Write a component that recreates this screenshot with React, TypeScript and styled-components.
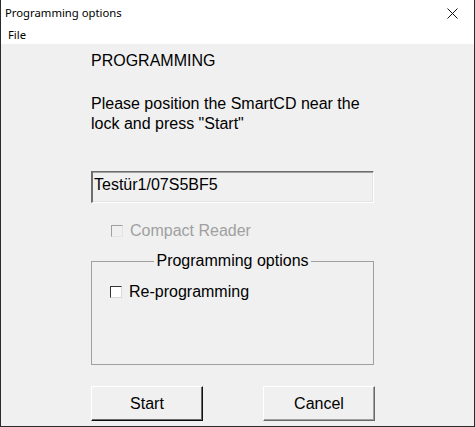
import React from "react";
import styled, { createGlobalStyle } from "styled-components";

const GlobalStyle = createGlobalStyle`
  html, body {
    margin: 0;
    padding: 0;
    background: #f0f0f0;
  }
  * {
    box-sizing: border-box;
  }
`;

export default function App() {
  return (
    <>
      <GlobalStyle />
      <Window>
        <TitleBar>
          <Title>Programming options</Title>
          <CloseButton aria-label="Close">
            <svg width="11" height="11" viewBox="0 0 11 11">
              <path d="M0.5 0.5 L10.5 10.5 M10.5 0.5 L0.5 10.5" stroke="#111" strokeWidth="1" />
            </svg>
          </CloseButton>
        </TitleBar>
        <MenuBar>
          <MenuItem>File</MenuItem>
        </MenuBar>

        <Body>
          <Heading>PROGRAMMING</Heading>
          <Message>
            Please position the SmartCD near the
            <br />
            lock and press "Start"
          </Message>

          <TextBox>Testür1/07S5BF5</TextBox>

          <CheckRow $indent={20} $top={19} $disabled>
            <CheckBox $disabled />
            <span>Compact Reader</span>
          </CheckRow>

          <GroupBox>
            <Legend>Programming options</Legend>
            <CheckRow $indent={18} $top={13}>
              <CheckBox />
              <span>Re-programming</span>
            </CheckRow>
          </GroupBox>

          <ButtonRow>
            <Button $default>Start</Button>
            <Button>Cancel</Button>
          </ButtonRow>
        </Body>
      </Window>
    </>
  );
}

const Window = styled.div`
  width: 475px;
  height: 427px;
  display: flex;
  flex-direction: column;
  border: 1px solid #2b2b2b;
  border-top: none;
  background: #f0f0f0;
  font-family: "Liberation Sans", Arial, sans-serif;
  color: #000;
`;

const TitleBar = styled.div`
  height: 26px;
  display: flex;
  align-items: center;
  justify-content: space-between;
  background: #fff;
  padding-left: 4px;
  font-family: "Noto Sans", "Open Sans", sans-serif;
  font-size: 11.3px;
`;

const Title = styled.span`
  margin-top: -1px;
`;

const CloseButton = styled.div`
  width: 46px;
  height: 26px;
  display: flex;
  align-items: center;
  justify-content: center;
  margin-right: -1px;
`;

const MenuBar = styled.div`
  height: 18px;
  display: flex;
  align-items: center;
  background: #fff;
  padding-left: 7px;
  font-family: "Noto Sans", "Open Sans", sans-serif;
  font-size: 11.3px;
`;

const MenuItem = styled.span`
  margin-top: -1px;
`;

const Body = styled.div`
  flex: 1;
  display: flex;
  flex-direction: column;
  padding: 8px 0 0 90px;
  font-size: 16px;
  line-height: 18px;
`;

const Heading = styled.div``;

const Message = styled.div`
  margin-top: 24px;
  line-height: 20px;
`;

const TextBox = styled.div`
  margin-top: 37px;
  height: 32px;
  width: 283px;
  padding: 4px 0 0 1px;
  background: #f0f0f0;
  border-style: solid;
  border-width: 1px 1px 1px 2px;
  border-color: #6e6e6e #fff #fff #6e6e6e;
  box-shadow: inset 0 1px 0 #a0a0a0, inset -1px -1px 0 #e3e3e3;
`;

const CheckRow = styled.div<{ $indent: number; $top: number; $disabled?: boolean }>`
  display: flex;
  align-items: center;
  gap: 7px;
  margin-top: ${(p) => p.$top}px;
  padding-left: ${(p) => p.$indent}px;
  height: 18px;
  color: ${(p) => (p.$disabled ? "#a0a0a0" : "#000")};
`;

const CheckBox = styled.span<{ $disabled?: boolean }>`
  width: 12px;
  height: 12px;
  flex-shrink: 0;
  background: ${(p) => (p.$disabled ? "#f0f0f0" : "#fff")};
  border-style: solid;
  border-width: 1px;
  border-color: ${(p) =>
    p.$disabled ? "#a0a0a0 #e3e3e3 #e3e3e3 #a0a0a0" : "#333 #d8d8d8 #d8d8d8 #333"};
`;

const GroupBox = styled.fieldset`
  margin: 12px 0 0;
  padding: 0;
  width: 283px;
  height: 113px;
  border: 1px solid #a0a0a0;
  border-radius: 0;
`;

const Legend = styled.legend`
  margin: 0 auto;
  padding: 0 2px;
  line-height: 18px;
`;

const ButtonRow = styled.div`
  margin-top: 21px;
  width: 284px;
  display: flex;
  justify-content: space-between;
`;

const Button = styled.div<{ $default?: boolean }>`
  width: 112px;
  height: 35px;
  display: flex;
  align-items: center;
  justify-content: center;
  background: #f0f0f0;
  border-style: solid;
  border-width: 1px;
  border-color: ${(p) => (p.$default ? "#fff #111 #111 #fff" : "#fff #696969 #696969 #fff")};
  box-shadow: ${(p) =>
    p.$default ? "inset -1px -1px 0 #696969" : "inset -1px -1px 0 #a0a0a0"};
`;
